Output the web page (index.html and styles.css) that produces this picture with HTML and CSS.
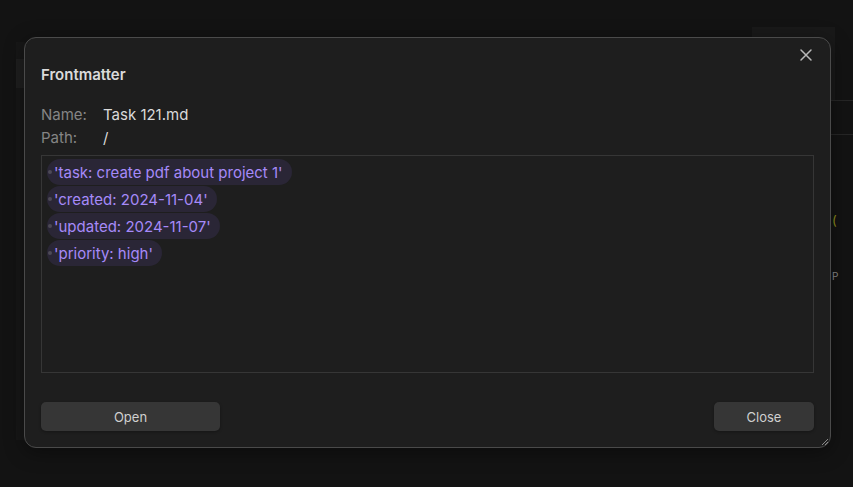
FILE: index.html
```html
<!DOCTYPE html>
<html lang="en">

<head>
    <meta charset="UTF-8">
    <meta name="viewport" content="width=device-width, initial-scale=1.0">
    <title>Frontmatter</title>
    <link rel="stylesheet" href="styles.css">
</head>

<body>
    <div id="workspace">
        <div class="side-left">
            <div class="side-tab"></div>
        </div>
        <div class="main-area"></div>
        <div class="side-right">
            <div class="right-header"></div>
            <div class="right-row"></div>
            <div class="right-row"></div>
            <div class="right-text">
                <span class="paren">(</span>
                <span class="letter">P</span>
            </div>
        </div>
    </div>

    <div id="modal">
        <button class="modal-close" aria-label="Close">
            <svg width="14" height="14" viewBox="0 0 14 14">
                <path d="M2 2 L12 12 M12 2 L2 12" stroke="#b8b8b8" stroke-width="1.5" stroke-linecap="round" />
            </svg>
        </button>
        <div class="modal-title">Frontmatter</div>

        <div class="info">
            <div class="info-row"><span class="info-label">Name:</span><span class="info-value">Task 121.md</span></div>
            <div class="info-row"><span class="info-label">Path:</span><span class="info-value">/</span></div>
        </div>

        <div class="fm-box">
            <div class="tag"><span class="dot"></span>'task: create pdf about project 1'</div>
            <div class="tag"><span class="dot"></span>'created: 2024-11-04'</div>
            <div class="tag"><span class="dot"></span>'updated: 2024-11-07'</div>
            <div class="tag"><span class="dot"></span>'priority: high'</div>
        </div>

        <div class="modal-buttons">
            <button class="btn btn-open">Open</button>
            <button class="btn btn-close">Close</button>
        </div>

        <svg class="resize" width="8" height="8" viewBox="0 0 8 8">
            <path d="M7 1 L1 7 M7 4 L4 7" stroke="#8a8a8a" stroke-width="1" />
        </svg>
    </div>
</body>

</html>
```

FILE: styles.css
```css
body {
    font-family: 'Inter', 'Noto Sans', sans-serif;
    background-color: #131313;
    margin: 0;
    height: 487px;
    overflow: hidden;
}

#workspace {
    display: flex;
    height: 100%;
}

.side-left {
    width: 9px;
    margin: 42px 0 47px 16px;
    background-color: #171717;
}

.side-tab {
    height: 29px;
    margin-top: 17px;
    background-color: #1f1f1f;
}

.main-area {
    flex: 1;
}

.side-right {
    width: 101px;
    margin-top: 27px;
    display: flex;
    flex-direction: column;
}

.right-header {
    height: 73px;
    width: 83px;
    background-color: #191919;
}

.right-row {
    height: 33px;
    border-top: 1px solid #262626;
}

.right-text {
    display: flex;
    flex-direction: column;
    padding-left: 80px;
    font-size: 13px;
    line-height: 16px;
}

.paren {
    color: #8c8c1c;
    margin-top: 44px;
}

.letter {
    color: #8a8a8a;
    font-size: 10px;
    margin-top: 40px;
}

#modal {
    position: absolute;
    left: 24px;
    top: 37px;
    width: 773px;
    height: 377px;
    padding: 16px 16px 16px 16px;
    background-color: #1e1e1e;
    border: 1px solid #4a4a4a;
    border-radius: 12px;
    box-shadow: 0 4px 20px rgba(0, 0, 0, 0.4);
    display: flex;
    flex-direction: column;
}

.modal-close {
    position: absolute;
    top: 5px;
    right: 12px;
    width: 24px;
    height: 24px;
    padding: 5px;
    border: none;
    background: none;
}

.modal-title {
    color: #dadada;
    font-size: 15px;
    font-weight: 600;
    line-height: 20px;
    margin-top: 11px;
    margin-bottom: 18px;
}

.info {
    display: flex;
    flex-direction: column;
}

.info-row {
    font-size: 15px;
    line-height: 23px;
    display: flex;
}

.info-label {
    color: #858585;
    width: 62px;
}

.info-value {
    color: #dadada;
}

.fm-box {
    margin-top: 6px;
    height: 209px;
    border: 1px solid #363636;
    padding: 3px 5px 4px;
    display: flex;
    flex-direction: column;
    align-items: flex-start;
    gap: 1px;
}

.tag {
    display: flex;
    align-items: center;
    height: 26px;
    padding: 0 9px 0 1px;
    border-radius: 13px;
    background-color: #2a2636;
    color: #a68af9;
    font-size: 15px;
}

.dot {
    width: 4px;
    height: 4px;
    border-radius: 50%;
    background-color: #4d4a57;
    margin-right: 2px;
}

.modal-buttons {
    margin-top: auto;
    display: flex;
    justify-content: space-between;
}

.btn {
    height: 29px;
    border: none;
    border-radius: 5px;
    background-color: #363636;
    color: #d0d0d0;
    font-family: 'Inter', sans-serif;
    font-size: 13px;
    box-shadow: 0 1px 3px rgba(0, 0, 0, 0.3);
}

.btn-open {
    width: 179px;
}

.btn-close {
    width: 100px;
}

.resize {
    position: absolute;
    right: 1px;
    bottom: 1px;
}
```
